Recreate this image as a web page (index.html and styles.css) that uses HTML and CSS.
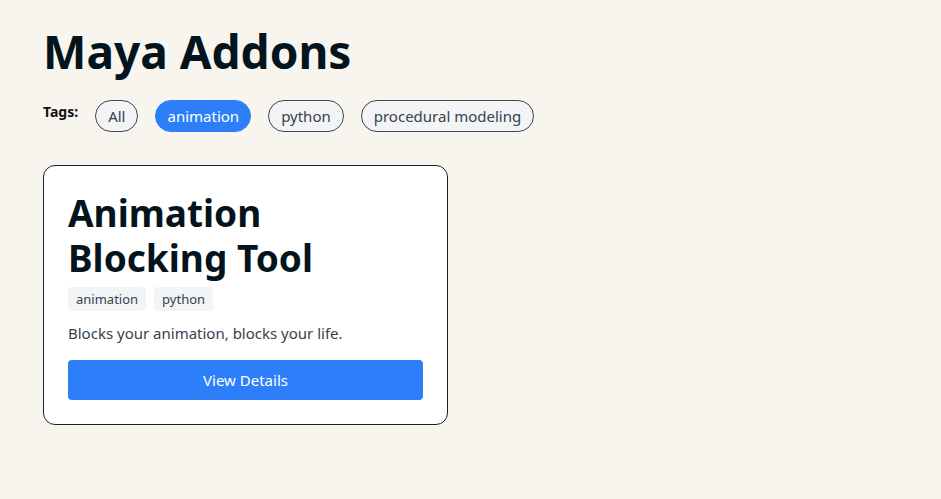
FILE: index.html
```html
<!DOCTYPE html>
<html lang="en">
<head>
<meta charset="utf-8">
<title>Maya Addons</title>
<link rel="stylesheet" href="styles.css">
</head>
<body>
<main class="page">
  <h1 class="title">Maya Addons</h1>
  <div class="filters">
    <span class="filters-label">Tags:</span>
    <button class="pill">All</button>
    <button class="pill pill-active">animation</button>
    <button class="pill">python</button>
    <button class="pill">procedural modeling</button>
  </div>
  <div class="grid">
    <article class="card">
      <h2 class="card-title">Animation Blocking Tool</h2>
      <div class="chips">
        <span class="chip">animation</span>
        <span class="chip">python</span>
      </div>
      <p class="card-desc">Blocks your animation, blocks your life.</p>
      <button class="card-btn">View Details</button>
    </article>
  </div>
</main>
</body>
</html>
```

FILE: styles.css
```css
* { box-sizing: border-box; }
html, body { margin: 0; padding: 0; }
body {
  background: #f8f5ee;
  font-family: "Noto Sans", "Open Sans", sans-serif;
  color: #0b1820;
}
.page {
  padding: 22px 43px;
}
.title {
  margin: 0;
  font-size: 46px;
  line-height: 58px;
  font-weight: 700;
  color: #03141c;
}
.filters {
  display: flex;
  align-items: flex-start;
  gap: 17px;
  margin-top: 20px;
}
.filters-label {
  font-size: 14px;
  font-weight: 700;
  color: #111;
  margin-top: 2px;
}
.pill {
  height: 32px;
  padding: 0 12px;
  border: 1px solid #3c4654;
  border-radius: 16px;
  background: #f3f4f6;
  color: #374151;
  font-family: inherit;
  font-size: 15px;
}
.pill-active {
  background: #2d7ff9;
  border-color: #2d7ff9;
  color: #fff;
  padding: 0 11px;
}
.grid {
  margin-top: 33px;
  display: grid;
  grid-template-columns: 405px;
}
.card {
  background: #fff;
  border: 1px solid #1a2228;
  border-radius: 12px;
  padding: 24px;
}
.card-title {
  margin: 0;
  font-size: 37px;
  line-height: 45px;
  font-weight: 700;
  color: #03141c;
}
.chips {
  display: flex;
  gap: 8px;
  margin-top: 7px;
}
.chip {
  background: #f3f4f6;
  border-radius: 4px;
  padding: 3px 8px;
  font-size: 13px;
  line-height: 18px;
  color: #374151;
}
.card-desc {
  margin: 11px 0 0;
  font-size: 15px;
  line-height: 22px;
  color: #374151;
}
.card-btn {
  display: block;
  width: 100%;
  height: 40px;
  margin-top: 16px;
  border: none;
  border-radius: 4px;
  background: #2d7ff9;
  color: #fff;
  font-family: inherit;
  font-size: 15px;
}
```
